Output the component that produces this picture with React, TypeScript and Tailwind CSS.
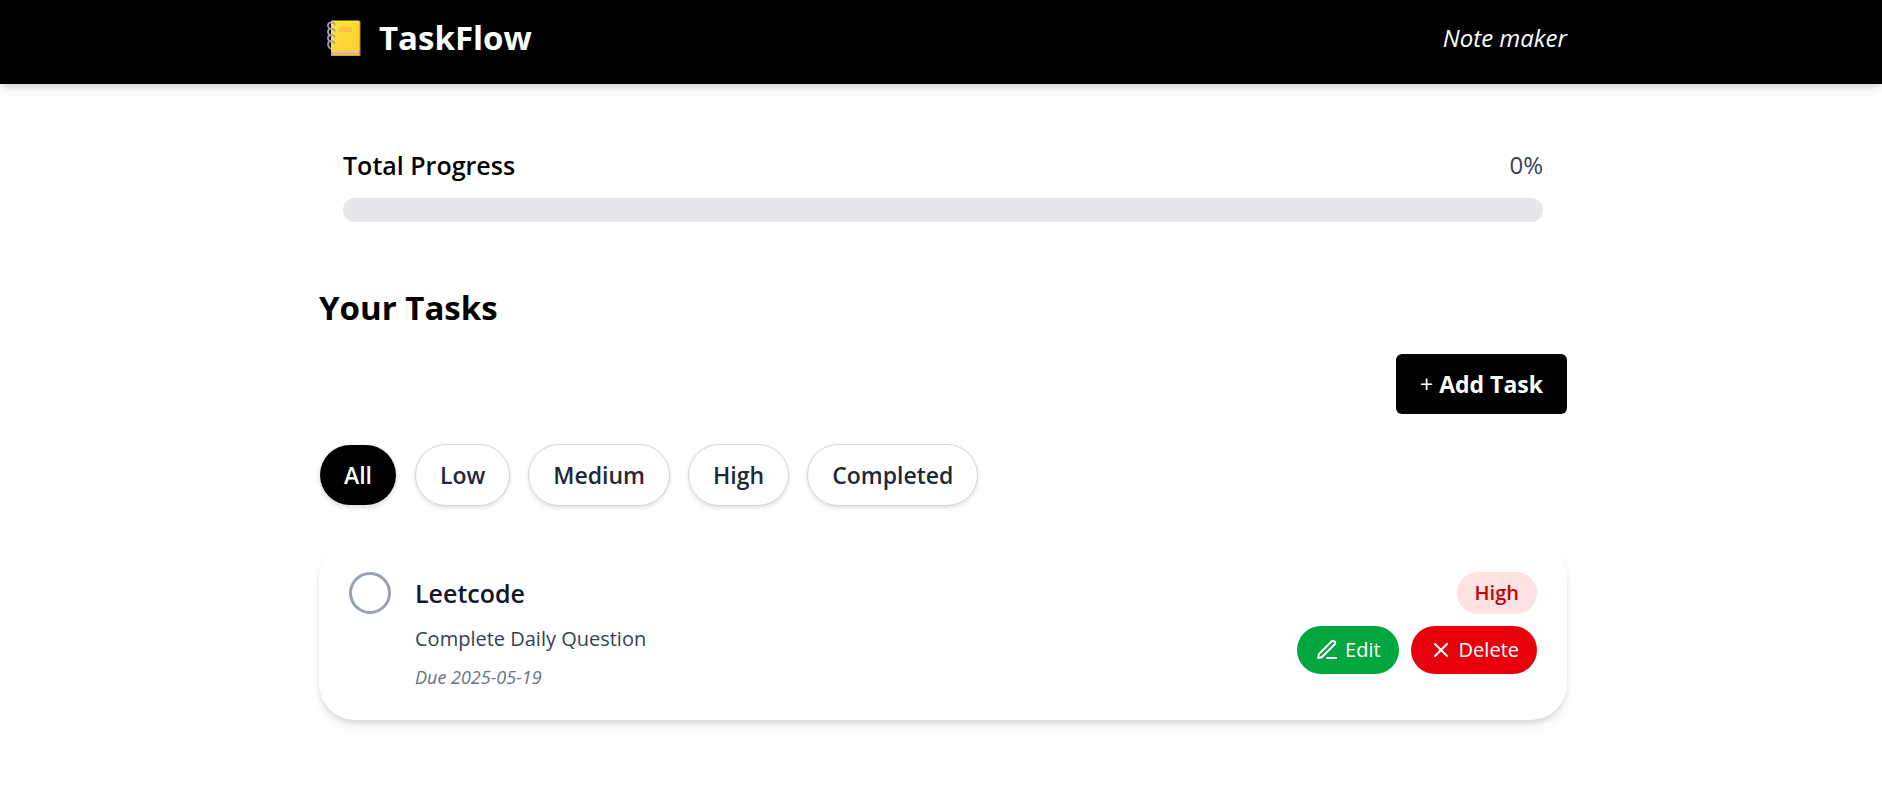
import { useState } from 'react';

const FILTERS = ['All', 'Low', 'Medium', 'High', 'Completed'];

function NotebookIcon() {
  return (
    <svg viewBox="0 0 36 36" className="size-9" aria-hidden="true">
      <defs>
        <linearGradient id="cover" x1="0" y1="0" x2="1" y2="1">
          <stop offset="0" stopColor="#ffe838" />
          <stop offset="1" stopColor="#fdca30" />
        </linearGradient>
      </defs>
      <rect x="4" y="1" width="29.500" height="35" rx="1" fill="#a9884a" />
      <rect x="4" y="0.5" width="28.5" height="31.5" rx="1" fill="url(#cover)" />
      <rect x="4.500" y="31.5" width="27.500" height="2" fill="#dcb8e8" />
      <rect x="4" y="33.5" width="28.5" height="2" rx="0.8" fill="#fbc233" />
      <rect x="11.500" y="7" width="13.5" height="5.5" rx="1.500" fill="#ffc247" />
      <g fill="none" stroke="#a99bb0" strokeWidth="1.8" strokeLinecap="round">
        <path d="M7.600 4.500C6.800 1.500 1.500 1.500 1 5C0.900 7 2 8.500 3.500 9" />
        <path d="M7.600 10.800C6.800 7.800 1.500 7.800 1 11.300C0.900 13.300 2 14.800 3.500 15.300" />
        <path d="M7.600 17.100C6.800 14.100 1.500 14.100 1 17.600C0.900 19.600 2 21.100 3.500 21.600" />
        <path d="M7.600 23.400C6.800 20.400 1.500 20.400 1 23.900C0.900 25.900 2 27.400 3 28.500" />
      </g>
    </svg>
  );
}

function PenIcon() {
  return (
    <svg viewBox="0 0 24 24" className="size-6" fill="none" stroke="currentColor" strokeWidth="2" strokeLinecap="round" strokeLinejoin="round" aria-hidden="true">
      <path d="M12 20h9" />
      <path d="M16.500 3.500a2.120 2.120 0 0 1 3 3L7 19l-4 1 1-4Z" />
    </svg>
  );
}

function CrossIcon() {
  return (
    <svg viewBox="0 0 24 24" className="size-6" fill="none" stroke="currentColor" strokeWidth="2" strokeLinecap="round" strokeLinejoin="round" aria-hidden="true">
      <path d="M18 6 6 18" />
      <path d="m6 6 12 12" />
    </svg>
  );
}

export default function App() {
  const [filter, setFilter] = useState('All');
  const [done, setDone] = useState(false);
  const progress = done ? 100 : 0;

  return (
    <div className="min-h-screen bg-white font-['Open_Sans','Noto_Sans',sans-serif] text-black">
      <header className="bg-black pt-2 pb-4 pl-1 text-white shadow-[0_6px_9px_-1px_rgba(0,0,0,0.1),0_3px_6px_-2px_rgba(0,0,0,0.1)]">
        <div className="mx-auto flex max-w-[1344px] items-center justify-between px-12">
          <div className="flex items-center gap-4 pl-2">
            <NotebookIcon />
            <h1 className="text-[33px] leading-[60px] font-bold">TaskFlow</h1>
          </div>
          <p className="text-2xl italic">Note maker</p>
        </div>
      </header>

      <main className="pl-1">
        <div className="mx-auto max-w-[1344px] px-12 pt-12">
          <section className="p-6 pt-3">
            <div className="flex items-center justify-between pb-3">
              <h2 className="text-[25px] leading-[42px] font-semibold">Total Progress</h2>
              <span className="text-2xl text-gray-700">{progress}%</span>
            </div>
            <div className="h-6 overflow-hidden rounded-full bg-gray-200" role="progressbar" aria-label="Total Progress" aria-valuenow={progress}>
              <div className="h-full rounded-full bg-black" style={{ width: `${progress}%` }} />
            </div>
          </section>

          <h2 className="pt-9 text-[33px] leading-[52px] font-bold">Your Tasks</h2>

          <div className="flex justify-end pt-5">
            <button type="button" className="h-[60px] rounded-md bg-black px-6 text-[23px] font-bold text-white">
              <span className="font-normal">+</span> Add Task
            </button>
          </div>

          <div className="flex flex-wrap gap-[18px] pt-[30px]">
            {FILTERS.map((name) => (
              <button
                key={name}
                type="button"
                aria-pressed={filter === name}
                onClick={() => setFilter(name)}
                className={
                  filter === name
                    ? 'h-[62px] rounded-full border border-transparent bg-black bg-clip-padding px-6 text-[23px] font-semibold text-white shadow-[0_2px_4px_rgba(0,0,0,0.12)]'
                    : 'h-[62px] rounded-full border border-gray-300 bg-white px-6 text-[23px] font-semibold text-gray-800 shadow-[0_2px_4px_rgba(0,0,0,0.12)]'
                }
              >
                {name}
              </button>
            ))}
          </div>

          <article className="mt-9 flex items-start justify-between rounded-[36px] bg-white p-[30px] shadow-[0_6px_9px_-1px_rgba(0,0,0,0.1),0_3px_6px_-2px_rgba(0,0,0,0.1)]">
            <div className="flex items-start gap-6">
              <input
                type="checkbox"
                aria-label="Mark Leetcode as completed"
                checked={done}
                onChange={() => setDone(!done)}
                className="size-[42px] appearance-none rounded-full border-3 border-gray-400 checked:bg-black"
              />
              <div>
                <h3 className="text-[25px] leading-[42px] font-semibold text-gray-900">Leetcode</h3>
                <p className="pt-2 text-xl leading-[34px] text-gray-700">Complete Daily Question</p>
                <p className="pt-2 text-lg leading-[26px] text-gray-500 italic">Due 2025-05-19</p>
              </div>
            </div>
            <div className="flex flex-col items-end gap-3">
              <span className="rounded-full bg-red-100 px-[18px] text-xl leading-[42px] font-semibold text-red-700">High</span>
              <div className="flex gap-3 text-xl text-white">
                <button type="button" className="flex h-12 items-center gap-1.5 rounded-full bg-green-600 px-[18px]">
                  <PenIcon />
                  Edit
                </button>
                <button type="button" className="flex h-12 items-center gap-1.5 rounded-full bg-red-600 px-[18px]">
                  <CrossIcon />
                  Delete
                </button>
              </div>
            </div>
          </article>
        </div>
      </main>
    </div>
  );
}
